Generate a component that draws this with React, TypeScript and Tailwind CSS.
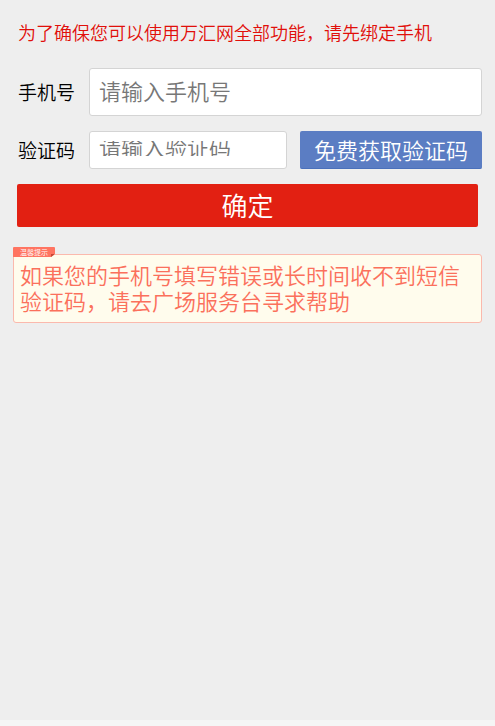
import React from "react";

const fieldBox = "min-w-0 flex-1 rounded-[3px] border border-[#d4d4d4] bg-white px-[9px]";
const fieldText =
  "block w-full bg-transparent text-[22px] text-[#333] outline-none placeholder:text-[#777] placeholder:opacity-100";
const labelText = "flex w-[71px] shrink-0 items-center text-[19px] leading-7 text-black";

export default function App() {
  return (
    <div className="flex min-h-screen flex-col bg-[#f5f5f5] font-['Noto_Sans_CJK_SC',sans-serif] font-[350]">
      <main className="flex-1 bg-[#eeeeee] px-[13px]">
        <form onSubmit={(e) => e.preventDefault()}>
          <p className="pt-[18px] pl-[5px] text-[18px] leading-7 text-[#e10f0a]">
            为了确保您可以使用万汇网全部功能，请先绑定手机
          </p>

          <div className="mt-[22px] flex h-12 pl-[5px]">
            <label htmlFor="phone" className={labelText}>
              手机号
            </label>
            <div className={fieldBox}>
              <input id="phone" type="tel" placeholder="请输入手机号" className={`${fieldText} h-11 pb-[2px]`} />
            </div>
          </div>

          <div className="mt-[15px] flex h-[38px] pl-[5px]">
            <label htmlFor="code" className={labelText}>
              验证码
            </label>
            <div className={`${fieldBox} py-[9px]`}>
              <div className="flex h-[15px] items-center overflow-hidden">
                <input id="code" type="text" placeholder="请输入验证码" className={`${fieldText} h-10 shrink-0 pb-1.5`} />
              </div>
            </div>
            <button
              type="button"
              className="ml-[13px] w-[182px] shrink-0 rounded-[2px] border-b border-[#4a70bb] bg-[#5b7dc3] pb-[2px] text-[22px] leading-8 text-white"
            >
              免费获取验证码
            </button>
          </div>

          <div className="mt-[15px] px-1">
            <button
              type="submit"
              className="h-[43px] w-full rounded-[2px] bg-[#e22012] pb-[2px] text-[26px] leading-10 text-white"
            >
              确定
            </button>
          </div>
        </form>

        <section className="relative mt-[27px] rounded-[3px] border border-[#fbb9ad] bg-[#fffced] px-1.5 pt-1.5 pb-[9px]">
          <h2 className="absolute -top-2 -left-px flex h-[10px] w-[42px] items-center rounded-t-[1px] bg-[#ff7461] pl-[7px] text-[7px] leading-[10px] text-white">
            温馨提示
            <svg className="absolute right-0 bottom-0 h-[3px] w-1" viewBox="0 0 4 3" aria-hidden="true">
              <path d="M4 0V3H0Z" fill="#fffced" />
              <path d="M0 3V0H4Z" fill="#c94735" />
            </svg>
          </h2>
          <p className="text-[22px] leading-[26px] text-[#fb705c]">
            如果您的手机号填写错误或长时间收不到短信验证码，请去广场服务台寻求帮助
          </p>
        </section>
      </main>
      <footer className="h-1.5 bg-[#f5f5f5]" />
    </div>
  );
}
